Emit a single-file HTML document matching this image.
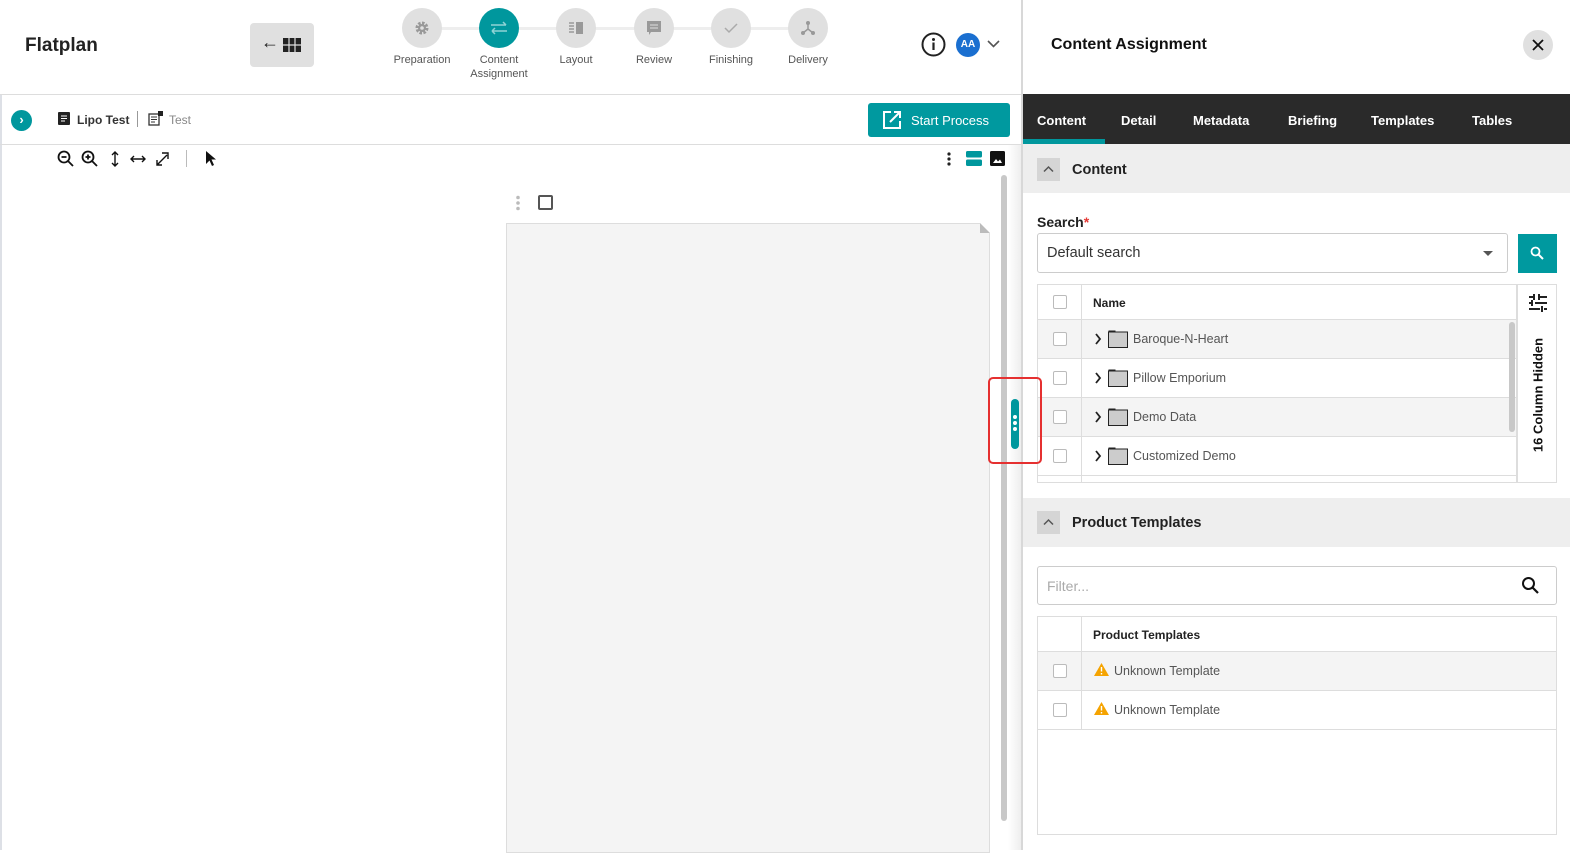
<!DOCTYPE html>
<html><head><meta charset="utf-8"><style>
*{box-sizing:border-box;margin:0;padding:0}
body{width:1570px;height:850px;overflow:hidden;background:#fff;font-family:"Liberation Sans",sans-serif;color:#222;position:relative}
.a{position:absolute}
.step{position:absolute;width:40px;height:40px;border-radius:50%;background:#e0e0e0;top:8px;display:flex;align-items:center;justify-content:center}
.lbl{position:absolute;top:53px;font-size:11px;color:#555;text-align:center;width:90px;line-height:14px}
.tab{position:absolute;top:113px;color:#fff;font-weight:bold;font-size:13px}
.cb{position:absolute;width:14px;height:14px;border:1.5px solid #bbb;border-radius:2px;background:#fff}
.row{position:absolute;left:0;right:0;border-bottom:1px solid #ddd}
.name{position:absolute;left:95px;font-size:12.5px;color:#555}
</style></head><body>
<div class="a" style="left:0;top:95px;width:2px;height:755px;background:#dde0e6"></div>
<div class="a" style="left:25px;top:35px;font-size:19px;font-weight:bold;color:#222">Flatplan</div>
<div class="a" style="left:250px;top:23px;width:64px;height:44px;background:#e0e0e0;border-radius:4px"></div>
<div class="a" style="left:261px;top:32px;font-size:18px;color:#222">&#8592;</div>
<svg class="a" style="left:283px;top:38px" width="18" height="14"><rect width="18" height="14" fill="#222"/><path d="M6 0V14M12 0V14M0 7H18" stroke="#e0e0e0" stroke-width="1.2"/></svg>
<div class="a" style="left:422px;top:27px;width:386px;height:3px;background:#eee"></div>
<div class="step" style="left:402px"><svg width="16" height="16" viewBox="0 0 16 16"><circle cx="8" cy="8" r="5" fill="none" stroke="#999" stroke-width="3" stroke-dasharray="2.5 1.4"/><circle cx="8" cy="8" r="4" fill="#999"/><circle cx="8" cy="8" r="1.8" fill="#e0e0e0"/></svg></div>
<div class="step" style="left:479px;background:#00979d"><svg width="20" height="16"><path d="M2 5H17M14 2L17 5M18 11H3M6 8L3 11M6 14L3 11" stroke="#8fd3d5" stroke-width="1.5" fill="none"/></svg></div>
<div class="step" style="left:556px"><svg width="16" height="14"><path d="M1 2H6M1 5H6M1 8H6M1 11H6" stroke="#999" stroke-width="1.5"/><rect x="8" y="1" width="7" height="12" fill="#999"/></svg></div>
<div class="step" style="left:634px"><svg width="16" height="16"><path d="M1 1H15V12H5L3 15V12H1Z" fill="#999"/><path d="M4 5H12M4 8H12" stroke="#e0e0e0"/></svg></div>
<div class="step" style="left:711px"><svg width="14" height="12"><path d="M1 6L5 10L13 2" stroke="#aaa" stroke-width="1.5" fill="none"/></svg></div>
<div class="step" style="left:788px"><svg width="16" height="16"><path d="M8 4V9L3 13M8 9L13 13" stroke="#999" stroke-width="1.5" fill="none"/><circle cx="8" cy="3" r="2" fill="#999"/><circle cx="3" cy="13" r="2" fill="#999"/><circle cx="13" cy="13" r="2" fill="#999"/></svg></div>
<div class="lbl" style="left:377px">Preparation</div>
<div class="lbl" style="left:454px">Content<br>Assignment</div>
<div class="lbl" style="left:531px">Layout</div>
<div class="lbl" style="left:609px">Review</div>
<div class="lbl" style="left:686px">Finishing</div>
<div class="lbl" style="left:763px">Delivery</div>
<svg class="a" style="left:921px;top:32px" width="25" height="25"><circle cx="12.5" cy="12.5" r="11" fill="none" stroke="#222" stroke-width="2"/><circle cx="12.5" cy="7.5" r="1.5" fill="#222"/><path d="M12.5 10.5V18" stroke="#222" stroke-width="2.2"/></svg>
<div class="a" style="left:956px;top:33px;width:24px;height:24px;border-radius:50%;background:#1a6fd0;color:#fff;font-size:10px;font-weight:bold;text-align:center;line-height:24px">AA</div>
<svg class="a" style="left:987px;top:40px" width="13" height="8"><path d="M1 1L6.5 6.5L12 1" stroke="#555" stroke-width="1.6" fill="none"/></svg>
<div class="a" style="left:0;top:94px;width:1021px;height:1px;background:#ddd"></div>
<div class="a" style="left:11px;top:110px;width:21px;height:21px;border-radius:50%;background:#00979d;color:#fff;font-size:13px;font-weight:bold;text-align:center;line-height:20px">&#8250;</div>
<svg class="a" style="left:58px;top:112px" width="12" height="13"><rect width="12" height="13" rx="1" fill="#222"/><path d="M3 4H9M3 6.5H9M3 9H7" stroke="#fff"/></svg>
<div class="a" style="left:77px;top:113px;font-size:12px;font-weight:bold;color:#333">Lipo Test</div>
<div class="a" style="left:137px;top:111px;width:1px;height:16px;background:#999"></div>
<svg class="a" style="left:148px;top:111px" width="16" height="15"><rect x="1" y="3" width="10" height="11" fill="none" stroke="#333" stroke-width="1.3"/><path d="M3 6H9M3 8.5H9M3 11H7" stroke="#333"/><rect x="10" y="0" width="5" height="5" fill="#222"/></svg>
<div class="a" style="left:169px;top:113px;font-size:12px;color:#888">Test</div>
<div class="a" style="left:868px;top:103px;width:142px;height:34px;background:#00999f;border-radius:3px"></div>
<svg class="a" style="left:882px;top:110px" width="20" height="20"><path d="M9 2H2V18H18V11" stroke="#fff" stroke-width="2" fill="none"/><path d="M8 12L18 2M12 2H18V8" stroke="#fff" stroke-width="2" fill="none"/></svg>
<div class="a" style="left:911px;top:113px;font-size:13px;color:#fff">Start Process</div>
<div class="a" style="left:0;top:144px;width:1021px;height:1px;background:#ddd"></div>
<svg class="a" style="left:57px;top:149px" width="120" height="20">
<g stroke="#111" stroke-width="1.8" fill="none"><circle cx="7" cy="8" r="5.5"/><path d="M11 12L16 17M4.5 8H9.5"/>
<circle cx="31" cy="8" r="5.5"/><path d="M35 12L40 17M28.5 8H33.5M31 5.5V10.5"/>
<path d="M58 3V17M55 6L58 3L61 6M55 14L58 17L61 14" stroke-width="1.4"/>
<path d="M74 10H88M77 7L74 10L77 13M85 7L88 10L85 13" stroke-width="1.4"/>
<path d="M100 16L110 6M100 11V16H105M105 4H111V10" stroke-width="1.4"/></g></svg>
<div class="a" style="left:186px;top:150px;width:1px;height:17px;background:#bbb"></div>
<svg class="a" style="left:205px;top:150px" width="12" height="17"><path d="M1 1V14L4.5 10.5L7 16L9 15L6.5 9.5H11Z" fill="#111"/></svg>
<svg class="a" style="left:946px;top:151px" width="6" height="16"><circle cx="3" cy="3" r="1.6" fill="#222"/><circle cx="3" cy="8" r="1.6" fill="#222"/><circle cx="3" cy="13" r="1.6" fill="#222"/></svg>
<svg class="a" style="left:966px;top:151px" width="16" height="15"><rect width="16" height="6.5" rx="1.5" fill="#00979d"/><rect y="8.5" width="16" height="6.5" rx="1.5" fill="#00979d"/></svg>
<svg class="a" style="left:990px;top:151px" width="15" height="15"><rect width="15" height="15" rx="1.5" fill="#111"/><path d="M3 12L6 8L8 10.5L10 8.5L12 12Z" fill="#fff"/></svg>
<svg class="a" style="left:514px;top:195px" width="8" height="16"><circle cx="4" cy="2.5" r="1.8" fill="#bbb"/><circle cx="4" cy="8" r="1.8" fill="#bbb"/><circle cx="4" cy="13.5" r="1.8" fill="#bbb"/></svg>
<div class="a" style="left:538px;top:195px;width:15px;height:15px;border:2px solid #555;border-radius:2px"></div>
<div class="a" style="left:506px;top:223px;width:484px;height:630px;background:#f4f4f4;border:1px solid #ddd"></div>
<div class="a" style="left:980px;top:223px;width:0;height:0;border-left:10px solid #bbb;border-top:10px solid #fff"></div>
<div class="a" style="left:1001px;top:175px;width:6px;height:646px;background:#c8c8c8;border-radius:3px"></div>
<div class="a" style="left:1008px;top:145px;width:13px;height:705px;background:linear-gradient(90deg,#fff,#eee)"></div>
<div class="a" style="left:1021px;top:0;width:549px;height:850px;background:#fff;border-left:2px solid #d8d8d8"></div>
<div class="a" style="left:1051px;top:36px;font-size:16px;font-weight:bold;color:#111">Content Assignment</div>
<div class="a" style="left:1523px;top:30px;width:30px;height:30px;border-radius:50%;background:#e0e0e0"></div>
<svg class="a" style="left:1532px;top:39px" width="12" height="12"><path d="M1 1L11 11M11 1L1 11" stroke="#111" stroke-width="1.8"/></svg>
<div class="a" style="left:1023px;top:94px;width:547px;height:50px;background:#2a2a2a"></div>
<div class="a" style="left:1023px;top:139px;width:82px;height:5px;background:#00979d"></div>
<div class="tab" style="left:1037px">Content</div>
<div class="tab" style="left:1121px">Detail</div>
<div class="tab" style="left:1193px">Metadata</div>
<div class="tab" style="left:1288px">Briefing</div>
<div class="tab" style="left:1371px">Templates</div>
<div class="tab" style="left:1472px">Tables</div>
<div class="a" style="left:1023px;top:144px;width:547px;height:49px;background:#eee"></div>
<div class="a" style="left:1037px;top:158px;width:23px;height:23px;background:#d5d5d5"></div>
<svg class="a" style="left:1043px;top:165px" width="11" height="8"><path d="M1 6.5L5.5 2L10 6.5" stroke="#555" stroke-width="1.5" fill="none"/></svg>
<div class="a" style="left:1072px;top:162px;font-size:14.5px;font-weight:bold;color:#222">Content</div>
<div class="a" style="left:1037px;top:214px;font-size:14px;font-weight:bold;color:#222">Search<span style="color:#e53935">*</span></div>
<div class="a" style="left:1037px;top:233px;width:471px;height:40px;border:1px solid #ccc;border-radius:3px"></div>
<div class="a" style="left:1047px;top:245px;font-size:14.5px;color:#333">Default search</div>
<div class="a" style="left:1483px;top:251px;border-left:5px solid transparent;border-right:5px solid transparent;border-top:5px solid #555"></div>
<div class="a" style="left:1518px;top:234px;width:39px;height:39px;background:#00999f"></div>
<svg class="a" style="left:1530px;top:246px" width="14" height="14"><circle cx="5.5" cy="5.5" r="4" stroke="#fff" stroke-width="1.8" fill="none"/><path d="M8.5 8.5L13 13" stroke="#fff" stroke-width="2"/></svg>
<div class="a" style="left:1037px;top:284px;width:520px;height:199px;border:1px solid #ddd;overflow:hidden">
 <div class="row" style="top:0;height:35px;right:40px"></div>
 <div class="cb" style="left:15px;top:10px"></div>
 <div class="a" style="left:55px;top:11px;font-size:12px;font-weight:bold;color:#222">Name</div>
 <div class="row" style="top:35px;height:39px;background:#f4f4f4;right:40px"></div>
 <div class="row" style="top:74px;height:39px;right:40px"></div>
 <div class="row" style="top:113px;height:39px;background:#f4f4f4;right:40px"></div>
 <div class="row" style="top:152px;height:39px;right:40px"></div>
 <div class="a" style="left:43px;top:0;width:1px;height:199px;background:#ddd"></div>
 <div class="a" style="left:478px;top:0;width:2px;height:199px;background:#ddd"></div>
 <div class="a" style="left:471px;top:37px;width:6px;height:110px;background:#c8c8c8;border-radius:3px"></div>
 <div class="cb" style="left:15px;top:47px"></div>
 <div class="cb" style="left:15px;top:86px"></div>
 <div class="cb" style="left:15px;top:125px"></div>
 <div class="cb" style="left:15px;top:164px"></div>
 <svg class="a" style="left:56px;top:48px" width="8" height="12"><path d="M2 1L6 6L2 11" stroke="#222" stroke-width="1.8" fill="none"/></svg>
 <svg class="a" style="left:56px;top:87px" width="8" height="12"><path d="M2 1L6 6L2 11" stroke="#222" stroke-width="1.8" fill="none"/></svg>
 <svg class="a" style="left:56px;top:126px" width="8" height="12"><path d="M2 1L6 6L2 11" stroke="#222" stroke-width="1.8" fill="none"/></svg>
 <svg class="a" style="left:56px;top:165px" width="8" height="12"><path d="M2 1L6 6L2 11" stroke="#222" stroke-width="1.8" fill="none"/></svg>
 <svg class="a" style="left:70px;top:45px" width="20" height="18"><rect x="0.5" y="2" width="19" height="15.5" fill="#ccc" stroke="#222"/><rect x="0.5" y="0.5" width="7" height="2" fill="#222"/></svg>
 <svg class="a" style="left:70px;top:84px" width="20" height="18"><rect x="0.5" y="2" width="19" height="15.5" fill="#ccc" stroke="#222"/><rect x="0.5" y="0.5" width="7" height="2" fill="#222"/></svg>
 <svg class="a" style="left:70px;top:123px" width="20" height="18"><rect x="0.5" y="2" width="19" height="15.5" fill="#ccc" stroke="#222"/><rect x="0.5" y="0.5" width="7" height="2" fill="#222"/></svg>
 <svg class="a" style="left:70px;top:162px" width="20" height="18"><rect x="0.5" y="2" width="19" height="15.5" fill="#ccc" stroke="#222"/><rect x="0.5" y="0.5" width="7" height="2" fill="#222"/></svg>
 <div class="name" style="top:47px">Baroque-N-Heart</div>
 <div class="name" style="top:86px">Pillow Emporium</div>
 <div class="name" style="top:125px">Demo Data</div>
 <div class="name" style="top:164px">Customized Demo</div>
 <svg class="a" style="left:490px;top:9px" width="20" height="18"><g stroke="#222" stroke-width="2"><path d="M1 3H6M10 3H19M1 9H3M7 9H19M1 15H12M16 15H19M6 0V6M4 6V12M14 12V18M11 0V6"/></g></svg>
 <div class="a" style="left:500px;top:110px;transform:translate(-50%,-50%) rotate(-90deg);white-space:nowrap;font-size:13px;font-weight:bold;color:#111">16 Column Hidden</div>
</div>
<div class="a" style="left:1023px;top:498px;width:547px;height:49px;background:#eee"></div>
<div class="a" style="left:1037px;top:511px;width:23px;height:23px;background:#d5d5d5"></div>
<svg class="a" style="left:1043px;top:518px" width="11" height="8"><path d="M1 6.5L5.5 2L10 6.5" stroke="#555" stroke-width="1.5" fill="none"/></svg>
<div class="a" style="left:1072px;top:515px;font-size:14.5px;font-weight:bold;color:#222">Product Templates</div>
<div class="a" style="left:1037px;top:566px;width:520px;height:39px;border:1px solid #ccc;border-radius:3px"></div>
<div class="a" style="left:1047px;top:578px;font-size:14px;color:#aaa">Filter...</div>
<svg class="a" style="left:1521px;top:576px" width="19" height="19"><circle cx="7.5" cy="7.5" r="5.5" stroke="#111" stroke-width="2" fill="none"/><path d="M11.5 11.5L17 17" stroke="#111" stroke-width="2.2"/></svg>
<div class="a" style="left:1037px;top:616px;width:520px;height:219px;border:1px solid #ddd;overflow:hidden">
 <div class="row" style="top:0;height:35px"></div>
 <div class="row" style="top:35px;height:39px;background:#f4f4f4"></div>
 <div class="row" style="top:74px;height:39px"></div>
 <div class="a" style="left:43px;top:0;width:1px;height:113px;background:#ddd"></div>
 <div class="a" style="left:55px;top:11px;font-size:12px;font-weight:bold;color:#222">Product Templates</div>
 <div class="cb" style="left:15px;top:47px"></div>
 <div class="cb" style="left:15px;top:86px"></div>
 <svg class="a" style="left:56px;top:46px" width="15" height="13"><path d="M7.5 0L15 13H0Z" fill="#f5a300"/><path d="M7.5 4V8.5M7.5 10V11.5" stroke="#fff" stroke-width="1.4"/></svg>
 <svg class="a" style="left:56px;top:85px" width="15" height="13"><path d="M7.5 0L15 13H0Z" fill="#f5a300"/><path d="M7.5 4V8.5M7.5 10V11.5" stroke="#fff" stroke-width="1.4"/></svg>
 <div class="name" style="top:47px;left:76px">Unknown Template</div>
 <div class="name" style="top:86px;left:76px">Unknown Template</div>
</div>
<div class="a" style="left:1011px;top:399px;width:8px;height:50px;background:#00979d;border-radius:4px"></div>
<div class="a" style="left:1013px;top:415px;width:4px;height:4px;border-radius:50%;background:#fff"></div>
<div class="a" style="left:1013px;top:421px;width:4px;height:4px;border-radius:50%;background:#fff"></div>
<div class="a" style="left:1013px;top:427px;width:4px;height:4px;border-radius:50%;background:#fff"></div>
<div class="a" style="left:988px;top:377px;width:54px;height:87px;border:2px solid #e53030;border-radius:5px"></div>
</body></html>
